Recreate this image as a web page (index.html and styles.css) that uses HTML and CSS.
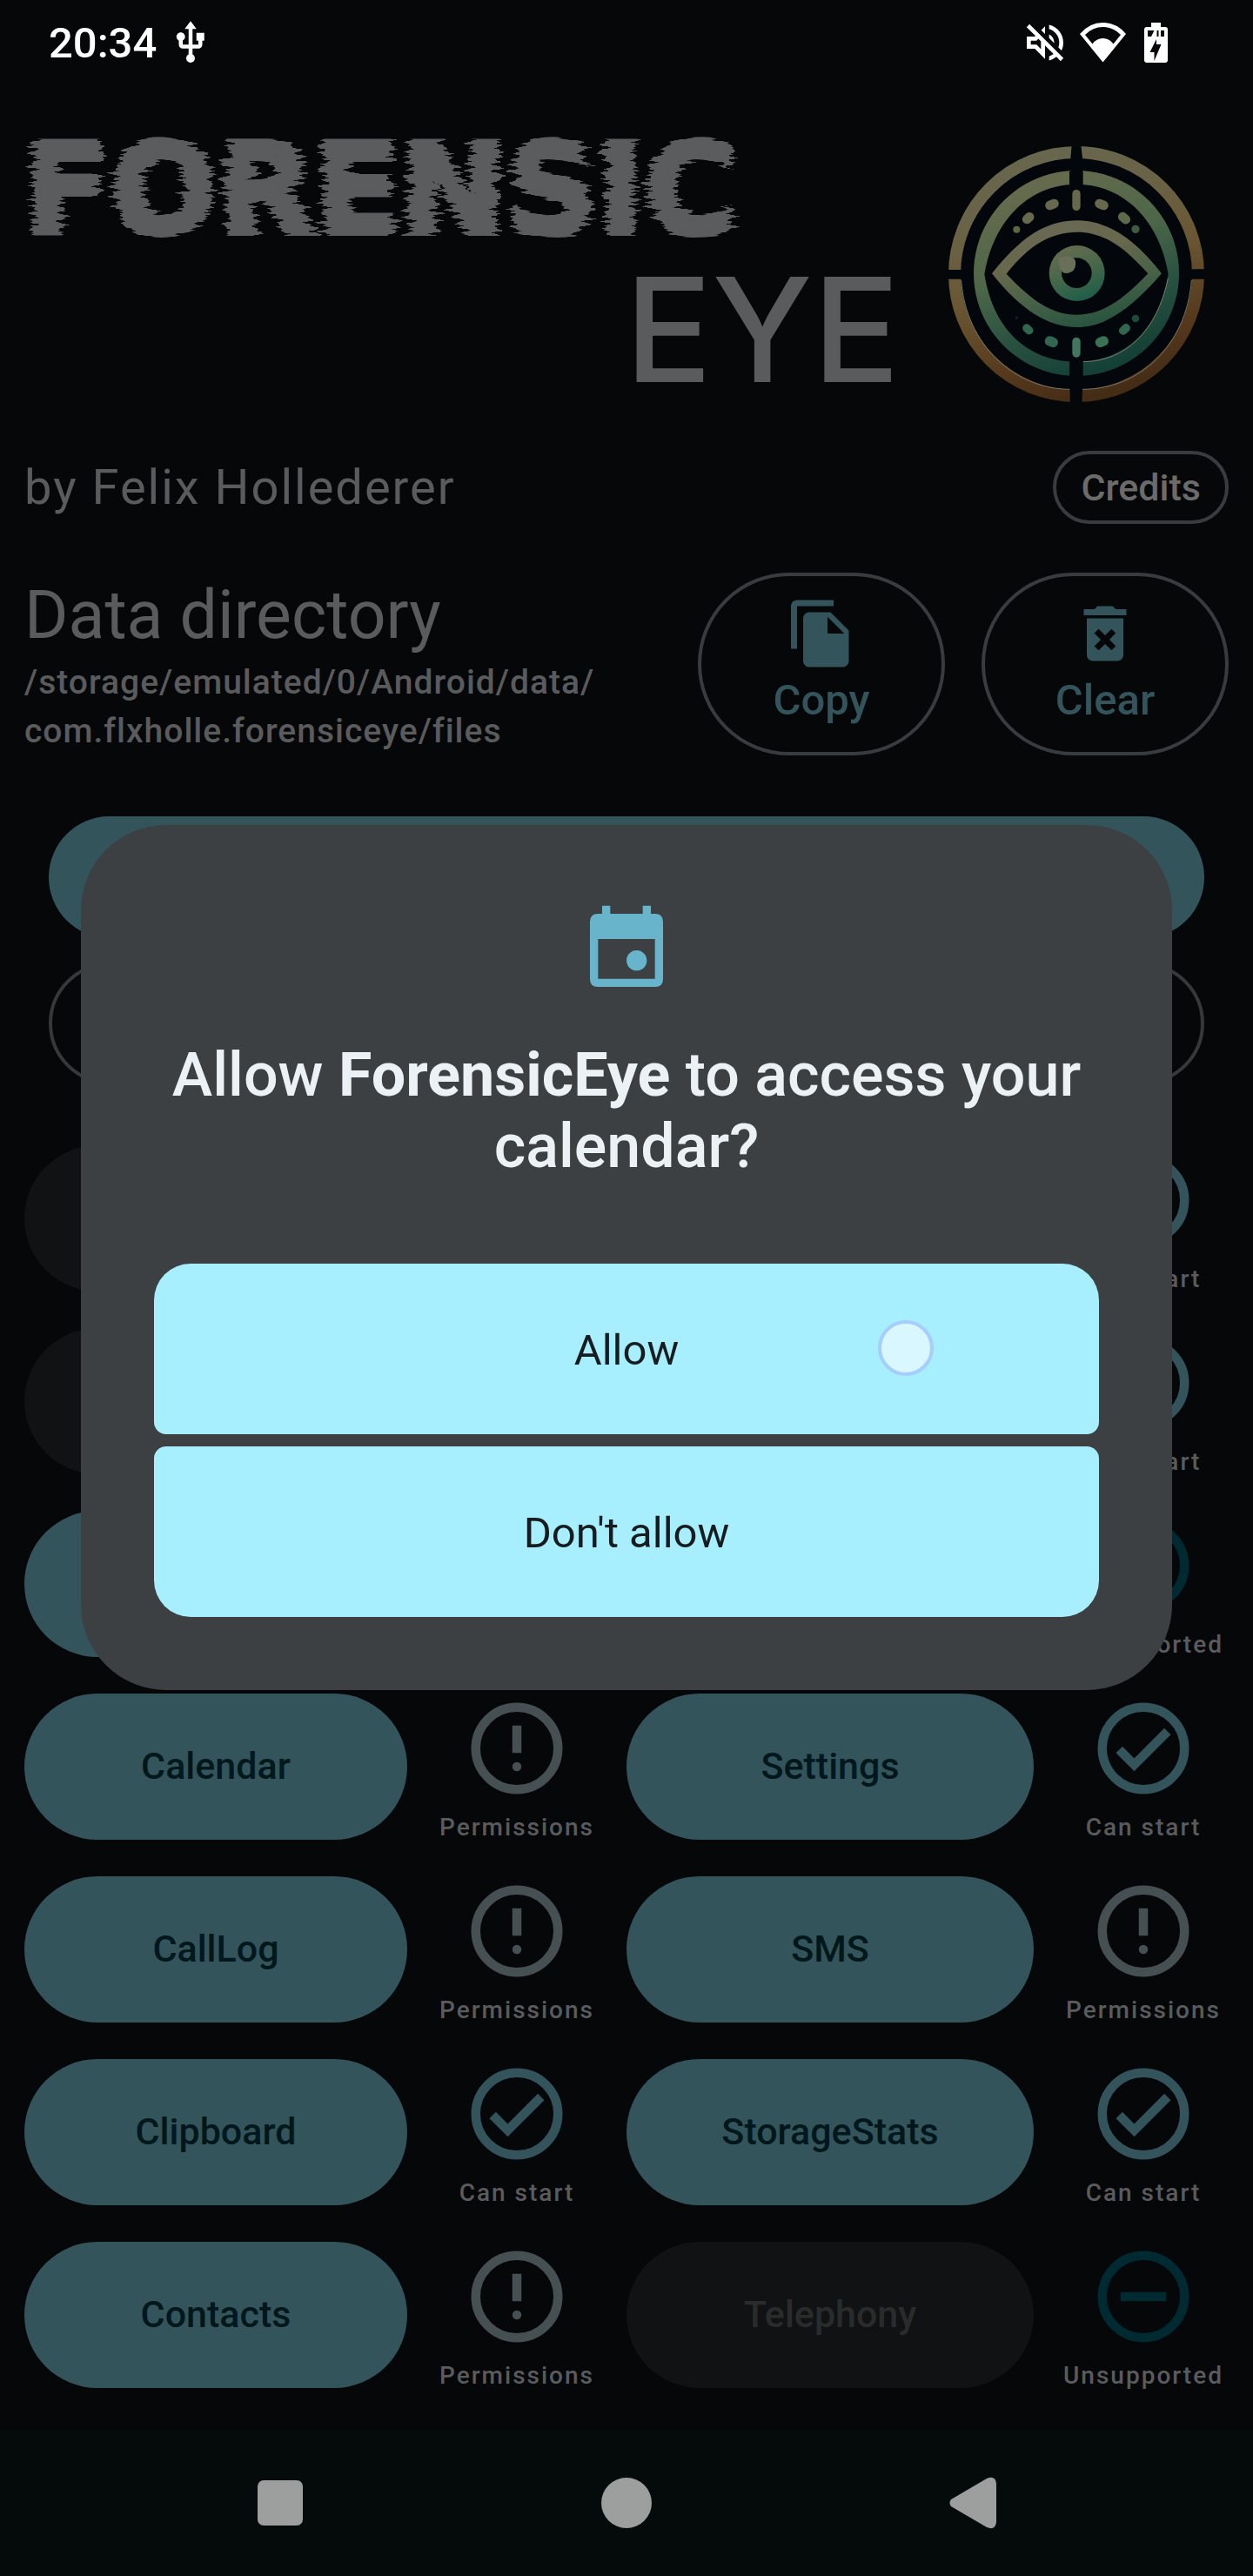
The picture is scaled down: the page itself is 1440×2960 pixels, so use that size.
FILE: index.html
```html
<!DOCTYPE html>
<html lang="en">
<head>
<meta charset="utf-8">
<meta name="viewport" content="width=device-width, initial-scale=1">
<title>ForensicEye</title>
<link rel="stylesheet" href="styles.css">
</head>
<body>
<svg class="defs" width="0" height="0" aria-hidden="true">
  <defs>
    <filter id="glitch" x="-5%" y="-5%" width="110%" height="110%">
      <feTurbulence type="fractalNoise" baseFrequency="0.010 0.26" numOctaves="2" seed="11" result="noise"/>
      <feColorMatrix in="noise" type="matrix" values="1 0 0 0 0.02  0 0 0 0 0.5  0 0 0 0 0.5  0 0 0 0 1" result="rows"/>
      <feDisplacementMap in="SourceGraphic" in2="rows" scale="34" xChannelSelector="R" yChannelSelector="G"/>
    </filter>
    <symbol id="i-check" viewBox="0 0 24 24"><circle cx="12" cy="12" r="9" fill="none" stroke="currentColor" stroke-width="2"/><path fill="currentColor" d="M16.59 7.58L10 14.17l-2.59-2.58L6 13l4 4 8-8z"/></symbol>
    <symbol id="i-alert" viewBox="0 0 24 24"><circle cx="12" cy="12" r="9" fill="none" stroke="currentColor" stroke-width="2"/><path fill="currentColor" d="M11 7h2v6h-2z"/><circle cx="12" cy="16" r="1" fill="currentColor"/></symbol>
    <symbol id="i-minus" viewBox="0 0 24 24"><circle cx="12" cy="12" r="9" fill="none" stroke="currentColor" stroke-width="2"/><path fill="currentColor" d="M7 11h10v2H7z"/></symbol>
  </defs>
</svg>
<div class="screen">
  <div class="statusbar">
    <span class="time">20:34</span>
    <svg class="usb" viewBox="0 0 24 24" fill="currentColor"><path d="M15 7v4h1v2h-3V5h2l-3-4-3 4h2v8H8v-2.07c.7-.37 1.2-1.08 1.2-1.93 0-1.21-.99-2.2-2.2-2.2-1.21 0-2.2.99-2.2 2.2 0 .85.5 1.56 1.2 1.93V13c0 1.11.89 2 2 2h3v3.05c-.71.37-1.2 1.1-1.2 1.95 0 1.22.99 2.2 2.2 2.2 1.21 0 2.2-.98 2.2-2.2 0-.85-.49-1.58-1.2-1.95V15h3c1.11 0 2-.89 2-2v-2h1V7h-4z"/></svg>
    <svg class="mute" viewBox="0 0 24 24" fill="currentColor"><path d="M4.34 2.93L2.93 4.34 7.29 8.7 7 9H3v6h4l5 5v-6.59l4.18 4.18c-.65.49-1.38.88-2.18 1.11v2.06c1.34-.3 2.57-.92 3.61-1.75l2.05 2.05 1.41-1.41L4.34 2.93zM10 15.17L7.83 13H5v-2h2.83l.88-.88L10 11.41v3.76zM19 12c0 .82-.15 1.61-.41 2.34l1.53 1.53c.56-1.17.88-2.48.88-3.87 0-4.28-2.99-7.86-7-8.77v2.06c2.89.86 5 3.54 5 6.71zm-7-8l-1.88 1.88L12 7.76zm4.5 8c0-1.77-1.02-3.29-2.5-4.03v1.79l2.48 2.48c.01-.08.02-.16.02-.24z"/></svg>
    <svg class="wifi" viewBox="0 0 53 46" fill="currentColor" fill-rule="evenodd"><path d="M0 13Q11 0 26.500 0T53 13L26.500 45.500ZM6 14L14.500 24.500Q19 18 26.500 18T38.500 24.500L47 14Q38 5 26.500 5T6 14Z"/></svg>
    <svg class="battery" viewBox="0 0 27 46" fill="currentColor"><path d="M8 0h11v5h5q3 0 3 3v35q0 3-3 3H3q-3 0-3-3V8q0-3 3-3h5z"/><path fill="#060709" d="M4 9h7.500L8 16H4zM14.500 9h2v7h-2zM19 9h4v7h-4zM14 19l-7.500 15h5v10l8-19h-5.500z"/></svg>
  </div>

  <main class="app">
    <header class="brand">
      <h1 class="wordmark"><span class="word-a">FORENSIC</span><span class="word-b">EYE</span></h1>
      <svg class="logo" viewBox="60 54 882 882" aria-hidden="true">
        <defs>
          <linearGradient id="gold" x1="0.300" y1="0" x2="0.600" y2="1"><stop offset="0" stop-color="#67674f"/><stop offset=".25" stop-color="#6a6245"/><stop offset=".5" stop-color="#6a5733"/><stop offset=".8" stop-color="#573a1e"/><stop offset="1" stop-color="#442c15"/></linearGradient>
          <linearGradient id="green" x1="0.300" y1="0" x2="0.700" y2="1"><stop offset="0" stop-color="#6a6b4e"/><stop offset=".4" stop-color="#4d6748"/><stop offset=".7" stop-color="#275040"/><stop offset="1" stop-color="#103d33"/></linearGradient>
          <linearGradient id="lid" x1="0.100" y1="0" x2="0.500" y2="1"><stop offset="0" stop-color="#6a6857"/><stop offset=".4" stop-color="#67684c"/><stop offset=".7" stop-color="#486247"/><stop offset="1" stop-color="#2a5440"/></linearGradient>
          <linearGradient id="iris" x1="0.200" y1="0" x2="0.600" y2="1"><stop offset="0" stop-color="#696b4f"/><stop offset=".5" stop-color="#48684a"/><stop offset="1" stop-color="#1f5d4a"/></linearGradient>
        </defs>
        <circle cx="501" cy="495" r="436" fill="#03070b"/>
        <circle cx="501" cy="495" r="420" fill="none" stroke="url(#gold)" stroke-width="42"/>
        <path fill="url(#green)" fill-rule="evenodd" d="M501 138a354 354 0 1 0 .1 0zM501 185C655 185 785 300 818 495C785 700 655 797 501 797C347 797 217 700 184 495C217 300 347 185 501 185Z"/>
        <path fill="none" stroke="#77776a" stroke-width="3" d="M104 516C120 740 290 892 480 892M898 516C880 740 720 892 522 892M524 797C670 797 780 690 817 510"/>
        <path fill="#03060a" d="M485 50h32l5 45v45h2v50h-47v-50h4V95zM477 790h47v60l-4 95h-40l-3-95zM56 480h50v32H56zM898 478h48v34h-48z"/>
        <path fill="url(#lid)" fill-rule="evenodd" d="M210 493C315 360 400 310 505 310C605 310 700 370 795 493C690 615 600 678 503 678C405 678 310 620 210 493ZM260 494C350 590 420 635 503 635C590 635 660 585 748 493C660 395 590 350 503 350C420 350 340 390 260 494Z"/>
        <circle cx="503" cy="492" r="96" fill="url(#iris)"/>
        <circle cx="502" cy="491" r="52" fill="#03070b"/>
        <path fill="#69705a" d="M440 440Q485 420 498 450Q502 490 465 492Q440 490 440 440Z"/>
        <g fill="#67694f"><rect x="487" y="204" width="28" height="72" rx="14"/><rect x="393" y="239" width="48" height="32" rx="16" transform="rotate(-22 417 255)"/><rect x="564" y="239" width="48" height="32" rx="16" transform="rotate(22 588 255)"/><rect x="313" y="286" width="44" height="32" rx="16" transform="rotate(-42 335 302)"/><rect x="643" y="286" width="46" height="32" rx="16" transform="rotate(42 666 302)" fill="#5d694b"/><circle cx="295" cy="341" r="12" fill="#5d6742"/><circle cx="705" cy="340" r="14" fill="#3e5a43"/></g>
        <g fill="#326650"><rect x="487" y="713" width="28" height="69" rx="14" fill="#417660"/><rect x="392" y="711" width="46" height="34" rx="16" transform="rotate(22 415 728)"/><rect x="566" y="711" width="46" height="34" rx="16" transform="rotate(-22 589 728)" fill="#3b7154"/><rect x="314" y="671" width="40" height="28" rx="14" transform="rotate(42 334 685)"/><rect x="646" y="671" width="42" height="29" rx="14" transform="rotate(-42 667 685)"/><circle cx="705" cy="648" r="13" fill="#1c4a3b"/><circle cx="295" cy="645" r="5" fill="#0f241d"/></g>
      </svg>
    </header>

    <section class="byline">
      <p class="author">by Felix Hollederer</p>
      <button class="pill credits" type="button">Credits</button>
    </section>

    <section class="directory">
      <div class="dir-text">
        <h2>Data directory</h2>
        <p>/storage/emulated/0/Android/data/<br>com.flxholle.forensiceye/files</p>
      </div>
      <button class="pill tool" type="button">
        <svg viewBox="0 0 24 24" fill="currentColor"><path d="M16 1H4c-1.1 0-2 .9-2 2v14h2V3h12V1zm-1 4l6 6v10c0 1.100-.9 2-2 2H7.990C6.890 23 6 22.100 6 21l.01-14c0-1.100.89-2 1.990-2h7zm-1 7h5.500L14 6.500V12z"/></svg>
        <span>Copy</span>
      </button>
      <button class="pill tool" type="button">
        <svg viewBox="0 0 24 24" fill="currentColor"><path fill-rule="evenodd" d="M6 19c0 1.100.9 2 2 2h8c1.100 0 2-.9 2-2V7H6v12zm2.460-7.120l1.410-1.410L12 12.590l2.120-2.120 1.410 1.410L13.410 14l2.120 2.120-1.410 1.410L12 15.410l-2.120 2.120-1.410-1.410L10.590 14l-2.130-2.120zM15.500 4l-1-1h-5l-1 1H5v2h14V4z"/></svg>
        <span>Clear</span>
      </button>
    </section>

    <section class="actions">
      <button class="action filled" type="button"></button>
      <button class="action outlined" type="button"></button>
    </section>

    <section class="modules">
      <button class="module first" type="button" disabled></button>
      <div class="state last ok"><svg><use href="#i-check"/></svg><span>Can start</span></div>

      <button class="module first" type="button" disabled></button>
      <div class="state last ok"><svg><use href="#i-check"/></svg><span>Can start</span></div>

      <button class="module first" type="button"></button>
      <div class="state last off"><svg><use href="#i-minus"/></svg><span>Unsupported</span></div>

      <button class="module" type="button">Calendar</button>
      <div class="state warn"><svg><use href="#i-alert"/></svg><span>Permissions</span></div>
      <button class="module" type="button">Settings</button>
      <div class="state ok"><svg><use href="#i-check"/></svg><span>Can start</span></div>

      <button class="module" type="button">CallLog</button>
      <div class="state warn"><svg><use href="#i-alert"/></svg><span>Permissions</span></div>
      <button class="module" type="button">SMS</button>
      <div class="state warn"><svg><use href="#i-alert"/></svg><span>Permissions</span></div>

      <button class="module" type="button">Clipboard</button>
      <div class="state ok"><svg><use href="#i-check"/></svg><span>Can start</span></div>
      <button class="module" type="button">StorageStats</button>
      <div class="state ok"><svg><use href="#i-check"/></svg><span>Can start</span></div>

      <button class="module" type="button">Contacts</button>
      <div class="state warn"><svg><use href="#i-alert"/></svg><span>Permissions</span></div>
      <button class="module" type="button" disabled>Telephony</button>
      <div class="state off"><svg><use href="#i-minus"/></svg><span>Unsupported</span></div>
    </section>
  </main>

  <nav class="navbar">
    <button type="button" aria-label="Recent apps"><svg viewBox="0 0 60 60" fill="currentColor"><rect x="4" y="4" width="52" height="52" rx="7"/></svg></button>
    <button type="button" aria-label="Home"><svg viewBox="0 0 60 60" fill="currentColor"><circle cx="30" cy="30" r="29"/></svg></button>
    <button type="button" aria-label="Back"><svg viewBox="0 0 60 60" fill="currentColor"><path d="M5 26L46 2Q56-2 57 8V52Q56 62 46 58L5 34Q2 30 5 26Z"/></svg></button>
  </nav>

  <div class="overlay">
    <div class="dialog" role="dialog" aria-modal="true" aria-labelledby="dialog-title">
      <svg class="dialog-icon" viewBox="0 0 24 24" fill="currentColor"><path fill-rule="evenodd" d="M6 1h2v2h8V1h2v2h1q2 0 2 2v14q0 2-2 2H5q-2 0-2-2V5q0-2 2-2h1zM5 9.200V19h14V9.200z"/><circle cx="14.500" cy="14.500" r="2.500"/></svg>
      <h2 id="dialog-title">Allow <b>ForensicEye</b> to access your calendar?</h2>
      <div class="choices">
        <button class="choice" type="button">Allow<span class="touch"></span></button>
        <button class="choice" type="button">Don't allow</button>
      </div>
    </div>
  </div>
</div>
</body>
</html>
```
FILE: styles.css
```css
:root {
  --bg: #060709;
  --teal: #33545b;
  --text: #5a5b5d;
  --outline: #393c3e;
  --tracking: 2px;
}

* { box-sizing: border-box; }

body {
  margin: 0;
  background: var(--bg);
  color: var(--text);
  font-family: Roboto, "Liberation Sans", sans-serif;
}

h1, h2, p { margin: 0; font-weight: 400; }

button {
  margin: 0;
  padding: 0;
  border: 0;
  background: none;
  color: inherit;
  font: inherit;
}

svg { display: block; flex: none; }

.defs { position: absolute; }

.screen {
  position: relative;
  display: flex;
  flex-direction: column;
  min-height: 100vh;
}

/* Status bar */
.statusbar {
  display: flex;
  align-items: center;
  height: 98px;
  padding: 0 98px 0 56px;
  color: #fff;
}

.time { font-size: 49px; font-weight: 500; }
.usb { width: 54px; height: 54px; margin-left: 12px; }
.mute { width: 56px; height: 56px; margin-left: auto; }
.wifi { width: 53px; height: 46px; margin: 0 21px 0 12px; }
.battery { width: 27px; height: 46px; }

/* Header */
.app { flex: 1; }

.brand {
  display: flex;
  justify-content: space-between;
  padding: 42px 56px 28px 28px;
}

.wordmark {
  display: flex;
  flex-direction: column;
  width: 1006px;
}

.word-a {
  font-family: "DejaVu Sans", sans-serif;
  font-size: 145px;
  font-weight: 700;
  line-height: 156px;
  -webkit-text-stroke: 6px currentColor;
  filter: url(#glitch);
}

.word-b {
  align-self: flex-end;
  font-family: Inter, sans-serif;
  font-size: 166px;
  font-weight: 500;
  line-height: 166px;
}

.logo { width: 294px; height: 294px; margin-top: 28px; }

.byline {
  display: flex;
  align-items: center;
  justify-content: space-between;
  padding: 28px;
}

.author { font-size: 56px; line-height: 84px; letter-spacing: var(--tracking); }

.pill {
  border: 4px solid var(--outline);
  border-radius: 105px;
}

.credits {
  height: 84px;
  padding: 0 28px;
  color: #6b6b6b;
  font-size: 43px;
  font-weight: 500;
}

.directory {
  display: flex;
  gap: 42px;
  align-items: center;
  padding: 28px;
}

.dir-text { flex: 1; }
.dir-text h2 { font-size: 77px; line-height: 98px; }
.dir-text p { font-size: 39px; font-weight: 500; line-height: 56px; letter-spacing: 1px; }

.tool {
  display: flex;
  flex-direction: column;
  align-items: center;
  width: 284px;
  height: 210px;
  padding-top: 24px;
  color: var(--teal);
  font-size: 49px;
  font-weight: 500;
  line-height: 70px;
}

.tool svg { width: 84px; height: 84px; }

/* Main actions */
.actions {
  display: grid;
  gap: 28px;
  padding: 42px 56px 70px;
}

.action { height: 140px; border-radius: 70px; }
.filled { background: var(--teal); }
.outlined { border: 4px solid #363839; }

/* Modules */
.modules {
  display: grid;
  grid-template-columns: 440fr 252px 468fr 252px;
  row-gap: 28px;
  align-items: start;
  padding: 0 0 34px 28px;
}

.module {
  height: 168px;
  padding-bottom: 2px;
  border-radius: 84px;
  background: var(--teal);
  color: #00181b;
  font-size: 43px;
  font-weight: 500;
}

.module:disabled { background: #111214; color: #2a2c2b; }
.first { grid-column: 1; }
.last { grid-column: 4; }

.state {
  display: flex;
  flex-direction: column;
  align-items: center;
}

.state svg { width: 126px; height: 126px; }

.state span {
  color: var(--text);
  font-size: 28px;
  font-weight: 500;
  line-height: 56px;
  letter-spacing: var(--tracking);
}

.ok { color: var(--teal); }
.warn { color: #465053; }
.off { color: #002a31; }

/* Navigation bar */
.navbar {
  display: grid;
  grid-template-columns: repeat(3, 1fr);
  height: 168px;
  padding: 0 123px;
  background: #050a0b;
  color: #9d9f9e;
}

.navbar button { display: grid; place-items: center; }
.navbar svg { width: 60px; height: 60px; }

/* Permission dialog */
.overlay {
  position: absolute;
  inset: 0;
  display: flex;
  align-items: center;
  padding: 98px 93px 168px;
}

.dialog {
  flex: 1;
  display: flex;
  flex-direction: column;
  align-items: center;
  padding: 88px 84px 84px;
  border-radius: 98px;
  background: #3c4043;
}

.dialog-icon { width: 112px; height: 112px; color: #68b5cb; }

.dialog h2 {
  margin: 46px 0 94px;
  color: #ebf1f5;
  font-size: 70px;
  font-weight: 500;
  line-height: 82px;
  text-align: center;
}

.choices {
  display: grid;
  gap: 14px;
  width: 100%;
}

.choice {
  position: relative;
  height: 196px;
  padding-top: 2px;
  border-radius: 14px 14px 42px 42px;
  background: #a7efff;
  color: #171d1f;
  font-size: 49px;
}

.choice:first-child { border-radius: 42px 42px 14px 14px; }

.touch {
  position: absolute;
  top: 65px;
  right: 190px;
  width: 64px;
  height: 64px;
  border: 4px solid #a6cdfb;
  border-radius: 50%;
  background: #d9f7ff;
}
```
